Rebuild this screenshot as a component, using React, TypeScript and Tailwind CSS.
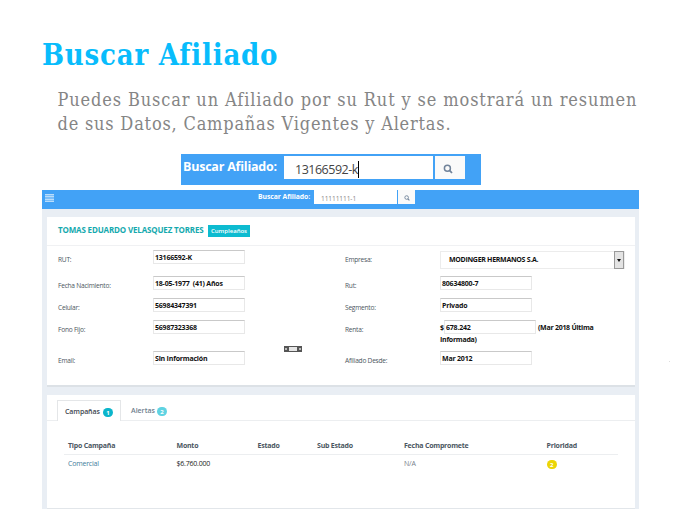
import React from "react";

const sans = "font-['Open_Sans','Noto_Sans',sans-serif]";
const serif = "font-['DejaVu_Serif_Condensed','DejaVu_Serif',serif] [font-stretch:condensed]";

function SearchIcon({ size }: { size: number }) {
  return (
    <svg width={size} height={size} viewBox="0 0 10 10" fill="none" stroke="#71839a">
      <circle cx="4.4" cy="4.2" r="3" strokeWidth="1.5" />
      <path d="M6.5 6.4 9 9" strokeWidth="1.8" />
    </svg>
  );
}

function Label({ children }: { children: React.ReactNode }) {
  return <div className="w-[95px] shrink-0 pt-[4px] text-[6.6px] leading-[12px] tracking-[-0.24px] text-[#4c5661]">{children}</div>;
}

function Box({ children }: { children?: React.ReactNode }) {
  return (
    <div className="h-[14px] w-[92px] shrink-0 border border-[#e8e8e8] border-t-[#c9c9c9] pl-px pt-px text-[7px] font-bold leading-[11px] tracking-[-0.2px] text-[#111]">
      {children}
    </div>
  );
}

function Field({ label, value, h }: { label: string; value: string; h: string }) {
  return (
    <div className={`flex items-start ${h}`}>
      <Label>{label}</Label>
      <Box>{value}</Box>
    </div>
  );
}

function Badge({ children, color }: { children: string; color: string }) {
  return (
    <span className={`flex h-[9px] w-[10px] items-center justify-center rounded-full text-[6px] font-bold leading-none text-white ${color}`}>
      {children}
    </span>
  );
}

const cols = "grid grid-cols-[108.5px_81px_59.5px_87px_142.5px_1fr] pl-1";

export default function App() {
  return (
    <div className={`h-[526px] w-[687px] overflow-hidden whitespace-nowrap bg-white ${sans}`}>
      <header className={`flex h-[154px] flex-col ${serif}`}>
        <h1 className="ml-[42px] mt-[36px] h-[38px] text-[29px] font-bold leading-[38px] tracking-[0.78px] text-[#08bcfc]">
          <span>Buscar Afiliado</span>
        </h1>
        <p className="ml-[57.5px] mt-[14px] text-[18px] leading-[24px] tracking-[0.88px] text-[#858585]">
          <span>Puedes Buscar un Afiliado por su Rut y se mostrará un resumen</span>
          <br />
          <span className="tracking-[0.8px]">de sus Datos, Campañas Vigentes y Alertas.</span>
        </p>
      </header>

      <div className="ml-[181px] flex h-[31px] w-[300px] items-start bg-[#42a2f6] pt-[1.5px]">
        <span className="w-[103px] pl-[2px] text-[12.5px] font-bold leading-[22px] tracking-[-0.22px] text-white">Buscar Afiliado:</span>
        <div className="flex h-[23.5px] w-[149px] items-center bg-white pl-[11px] pt-[5px] text-[12.5px] leading-4 tracking-[-0.5px] text-[#444]">
          13166592-k
          <span className="h-[17px] w-px bg-black" />
        </div>
        <div className="ml-[1.5px] flex h-[23.5px] w-[30.5px] items-center justify-center bg-[#fafafa] pr-[3px] pt-1">
          <SearchIcon size={10} />
        </div>
      </div>

      <main className="ml-[42px] mt-[5px] h-[319px] w-[597px] bg-[#e9eef4]">
        <nav className="flex h-[19px] items-start bg-[#42a2f6]">
          <div className="ml-[3px] mt-[4px] flex h-[8px] w-[9px] flex-col justify-between bg-[#7dbff8]">
            <i className="h-px bg-[#b9ddfb]" />
            <i className="h-px bg-[#b9ddfb]" />
            <i className="h-px bg-[#b9ddfb]" />
            <i className="h-px bg-[#b9ddfb]" />
          </div>
          <span className="ml-[204px] w-[56px] text-[6.8px] font-bold leading-[13px] tracking-[-0.05px] text-white">Buscar Afiliado:</span>
          <div className="h-[14px] w-[83px] bg-white pl-[7px] pt-[3px] text-[6.6px] leading-[11px] tracking-[-0.1px] text-[#888]">11111111-1</div>
          <div className="ml-px flex h-[14px] w-[17px] items-center justify-center bg-[#fafafa] pt-px">
            <SearchIcon size={6} />
          </div>
        </nav>

        <section className="ml-[5px] mt-[8px] h-[170px] w-[588px] border-b-2 border-[#dce1e6] bg-white">
          <div className="flex h-[29px] items-center border-b border-[#f0f1f3] pl-[11px]">
            <span className="-mt-[2px] w-[150px] text-[8px] font-bold leading-3 tracking-[-0.16px] text-[#14a9ae]">TOMAS EDUARDO VELASQUEZ TORRES</span>
            <span className="flex h-[12px] w-[42px] items-center justify-center bg-[#0dbbd0] text-[6px] font-semibold text-white">Cumpleaños</span>
          </div>
          <div className="flex pl-[11px] pt-[4px]">
            <div className="w-[226px]">
              <Field label="RUT:" value="13166592-K" h="h-[26px]" />
              <Field label="Fecha Nacimiento:" value="18-05-1977  (41) Años" h="h-[22px] whitespace-pre" />
              <Field label="Celular:" value="56984347391" h="h-[22px]" />
              <Field label="Fono Fijo:" value="56987323368" h="h-[31px]" />
              <Field label="Email:" value="Sin Información" h="h-[14px]" />
            </div>
            <div className="w-[61px] pt-[96px]">
              <div className="flex h-[6px] w-[18px] items-center justify-between bg-[#555] px-px">
                <i className="size-[2px] bg-[#bbb]" />
                <i className="h-[4px] w-[8px] bg-[#e5e5e5]" />
                <i className="size-[2px] bg-[#bbb]" />
              </div>
            </div>
            <div className="w-[280px]">
              <div className="flex h-[26px] items-start">
                <Label>Empresa:</Label>
                <div className="mt-px flex h-[18px] w-[185px] items-center justify-between border border-[#ececec] pl-[8px] text-[7px] font-bold tracking-[-0.3px] text-[#111]">
                  <span>MODINGER HERMANOS S.A.</span>
                  <span className="flex h-[18px] w-[10px] items-center justify-center border border-[#999] bg-[#e3e3e3]">
                    <svg width="4" height="3" viewBox="0 0 4 3"><path d="M0 0h4L2 3z" fill="#111" /></svg>
                  </span>
                </div>
              </div>
              <Field label="Rut:" value="80634800-7" h="h-[22px]" />
              <Field label="Segmento:" value="Privado" h="h-[22px]" />
              <div className="flex h-[31px] items-start">
                <Label>Renta:</Label>
                <div className="text-[7px] font-bold leading-[11px] tracking-[-0.26px] text-[#111]">
                  <div className="flex">
                    <span className="w-[4px] pt-[2px]">$</span>
                    <Box>678.242</Box>
                    <span className="pl-[2px] pt-[2px]">(Mar 2018 Última</span>
                  </div>
                  <div>Informada)</div>
                </div>
              </div>
              <Field label="Afiliado Desde:" value="Mar 2012" h="h-[14px]" />
            </div>
          </div>
        </section>

        <section className="ml-[5px] mt-[8px] h-[114px] w-[588px] border-b border-[#e2e6ea] bg-white">
          <div className="flex h-[26px] items-end border-b border-[#eceef0] pl-[10px] text-[7px] font-semibold">
            <div className="-mb-px flex h-[21px] w-[64px] items-center gap-1 border border-b-0 border-[#e4e6e8] bg-white pl-[7px] pt-[3px] text-[#3c4650]">
              <span className="w-[34px] tracking-[-0.1px]">Campañas</span>
              <Badge color="bg-[#0bb5cb]">1</Badge>
            </div>
            <div className="flex h-[20px] items-center gap-[2px] pl-[10px] pt-[3px] text-[#6d7d8d]">
              <span className="w-[24px]">Alertas</span>
              <Badge color="bg-[#5fd3e2]">2</Badge>
            </div>
          </div>
          <div className="ml-[17px] mt-[15px] w-[554px]">
            <div className={`${cols} h-[19px] items-center border-b border-[#eceef0] pt-[2px] text-[7px] font-bold tracking-[-0.22px] text-[#4b5661]`}>
              <span>Tipo Campaña</span>
              <span>Monto</span>
              <span>Estado</span>
              <span>Sub Estado</span>
              <span>Fecha Compromete</span>
              <span>Prioridad</span>
            </div>
            <div className={`${cols} h-[18px] items-center pt-px text-[7px] tracking-[-0.22px] text-[#222]`}>
              <span className="text-[#447d9b]">Comercial</span>
              <span>$6.760.000</span>
              <span />
              <span />
              <span className="text-[#77808a]">N/A</span>
              <Badge color="bg-[#ecd506]">2</Badge>
            </div>
          </div>
        </section>
      </main>
      <div className="absolute left-[669px] top-[361px] size-px bg-[#ddd]" />
    </div>
  );
}
